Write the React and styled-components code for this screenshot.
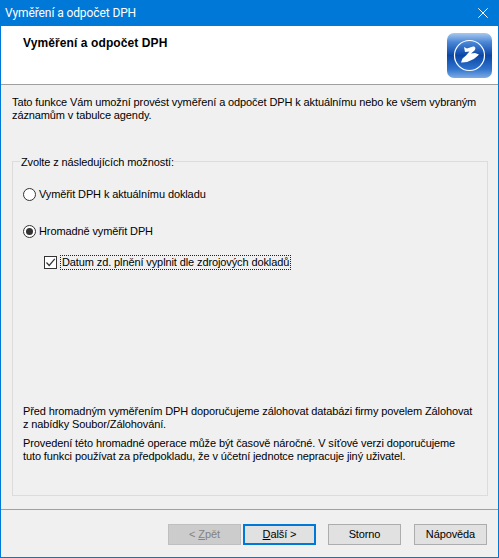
import React from 'react';
import styled, { createGlobalStyle } from 'styled-components';

const GlobalStyle = createGlobalStyle`
  html, body {
    margin: 0;
    padding: 0;
    background: #f0f0f0;
  }
  * {
    box-sizing: border-box;
  }
`;

const Dialog = styled.div`
  width: 499px;
  height: 558px;
  display: flex;
  flex-direction: column;
  border: 1px solid #0078d7;
  border-top: 0;
  background: #f0f0f0;
  color: #000;
  font-family: "Liberation Sans", Arial, sans-serif;
  font-size: 11px;
  letter-spacing: -0.11px;
  line-height: 13px;
  overflow: hidden;
`;

const TitleBar = styled.div`
  height: 26px;
  flex: 0 0 auto;
  display: flex;
  align-items: center;
  justify-content: space-between;
  padding: 0 10px 0 4px;
  background: #0078d7;
  color: #fff;
  font-family: Roboto, sans-serif;
  font-size: 12px;
  letter-spacing: -0.1px;
`;

const Header = styled.div`
  height: 59px;
  flex: 0 0 auto;
  display: flex;
  justify-content: space-between;
  padding: 7px 6px 0 22px;
  background: #fff;
  border-bottom: 1px solid #a0a0a0;
`;

const HeaderTitle = styled.div`
  padding-top: 4px;
  font-size: 12px;
  font-weight: 700;
  letter-spacing: 0.1px;
`;

const Description = styled.p`
  margin: 11px 11px 0;
  white-space: nowrap;
`;

const Group = styled.fieldset`
  flex: 1 1 auto;
  min-height: 0;
  margin: 31px 10px 0 11px;
  padding: 0 10px 32px 10px;
  display: flex;
  flex-direction: column;
  border: 1px solid #dcdcdc;
`;

const GroupTitle = styled.legend`
  margin-left: -3px;
  padding: 3px 0 0 1px;
  line-height: 13px;
`;

const Option = styled.div`
  display: flex;
  align-items: center;
  gap: 3px;
  height: 14px;
  margin-top: ${(p) => p.$top}px;
`;

const Radio = styled.span`
  width: 13px;
  height: 13px;
  flex: 0 0 auto;
  display: flex;
  align-items: center;
  justify-content: center;
  border: 1px solid #333;
  border-radius: 50%;
  background: #fff;

  &::after {
    content: '';
    display: ${(p) => (p.$checked ? 'block' : 'none')};
    width: 7px;
    height: 7px;
    border-radius: 50%;
    background: #333;
  }
`;

const CheckRow = styled.div`
  display: flex;
  align-items: center;
  gap: 3px;
  margin: 17px 0 0 21px;
`;

const CheckBox = styled.span`
  width: 13px;
  height: 13px;
  flex: 0 0 auto;
  display: flex;
  border: 1px solid #333;
  background: #fff;
`;

const FocusLabel = styled.span`
  padding: 0 1px;
  height: 15px;
  border: 1px dotted #222;
  white-space: nowrap;
`;

const Notes = styled.div`
  margin-top: auto;
  display: flex;
  flex-direction: column;
  gap: 6px;
  white-space: nowrap;
`;

const Note = styled.p`
  margin: 0;
`;

const Footer = styled.div`
  height: 48px;
  flex: 0 0 auto;
  margin-top: 13px;
  display: flex;
  justify-content: flex-end;
  padding: 14px 11px 0 0;
  border-top: 1px solid #a0a0a0;
`;

const Button = styled.button`
  width: 73px;
  height: 21px;
  margin-left: ${(p) => p.$gap}px;
  padding: 0;
  font: inherit;
  letter-spacing: inherit;
  color: ${(p) => (p.disabled ? '#838383' : '#000')};
  background: ${(p) => (p.disabled ? '#cccccc' : '#e1e1e1')};
  border: ${(p) => (p.$primary ? '2px solid #0078d7' : '1px solid')};
  border-color: ${(p) => (p.$primary ? '#0078d7' : p.disabled ? '#bfbfbf' : '#adadad')};
`;

function CloseIcon() {
  return (
    <svg width="10" height="10" viewBox="0 0 10 10" aria-hidden="true">
      <path d="M0.3 0.3 L9.7 9.7 M9.7 0.3 L0.3 9.7" stroke="#fff" strokeWidth="1" fill="none" />
    </svg>
  );
}

function Logo() {
  return (
    <svg width="45" height="45" viewBox="0 0 45 45" aria-hidden="true">
      <defs>
        <linearGradient id="logoFill" x1="0" y1="0" x2="0" y2="1">
          <stop offset="0" stopColor="#a9c8ee" />
          <stop offset="0.2" stopColor="#4c88d6" />
          <stop offset="0.5" stopColor="#0a46a8" />
          <stop offset="0.8" stopColor="#2f73cc" />
          <stop offset="1" stopColor="#7eabe4" />
        </linearGradient>
      </defs>
      <rect x="0" y="0" width="45" height="45" rx="7" fill="url(#logoFill)" />
      <circle cx="22.5" cy="22.5" r="15" fill="none" stroke="#fff" strokeWidth="1.2" />
      <path
        d="M17 14 L20 15.5 L26 13.5 C28.5 13.5 29 15.5 27.5 17.5 L24 20.5 L28 20 L32 21.5 C28 26 21 30 14 29.5 L15.5 25.5 L19 22.5 L22.5 18.5 L18 19 Z"
        fill="#fff"
      />
    </svg>
  );
}

function CheckMark() {
  return (
    <svg width="11" height="11" viewBox="0 0 11 11" aria-hidden="true">
      <path d="M1.5 5.5 L4.2 8.5 L9.8 1.8" stroke="#333" strokeWidth="1.2" fill="none" />
    </svg>
  );
}

export default function App() {
  return (
    <>
      <GlobalStyle />
      <Dialog>
        <TitleBar>
          <span>Vyměření a odpočet DPH</span>
          <CloseIcon />
        </TitleBar>
        <Header>
          <HeaderTitle>Vyměření a odpočet DPH</HeaderTitle>
          <Logo />
        </Header>
        <Description>
          Tato funkce Vám umožní provést vyměření a odpočet DPH k aktuálnímu nebo ke všem vybraným
          <br />
          záznamům v tabulce agendy.
        </Description>
        <Group>
          <GroupTitle>Zvolte z následujících možností:</GroupTitle>
          <Option $top={18}>
            <Radio />
            <span>Vyměřit DPH k aktuálnímu dokladu</span>
          </Option>
          <Option $top={23}>
            <Radio $checked />
            <span>Hromadně vyměřit DPH</span>
          </Option>
          <CheckRow>
            <CheckBox>
              <CheckMark />
            </CheckBox>
            <FocusLabel>Datum zd. plnění vyplnit dle zdrojových dokladů</FocusLabel>
          </CheckRow>
          <Notes>
            <Note>
              Před hromadným vyměřením DPH doporučujeme zálohovat databázi firmy povelem Zálohovat
              <br />
              z nabídky Soubor/Zálohování.
            </Note>
            <Note>
              Provedení této hromadné operace může být časově náročné. V síťové verzi doporučujeme
              <br />
              tuto funkci používat za předpokladu, že v účetní jednotce nepracuje jiný uživatel.
            </Note>
          </Notes>
        </Group>
        <Footer>
          <Button disabled>
            &lt; <u>Z</u>pět
          </Button>
          <Button $primary $gap={2}>
            <u>D</u>alší &gt;
          </Button>
          <Button $gap={12}>Storno</Button>
          <Button $gap={13}>Nápověda</Button>
        </Footer>
      </Dialog>
    </>
  );
}
